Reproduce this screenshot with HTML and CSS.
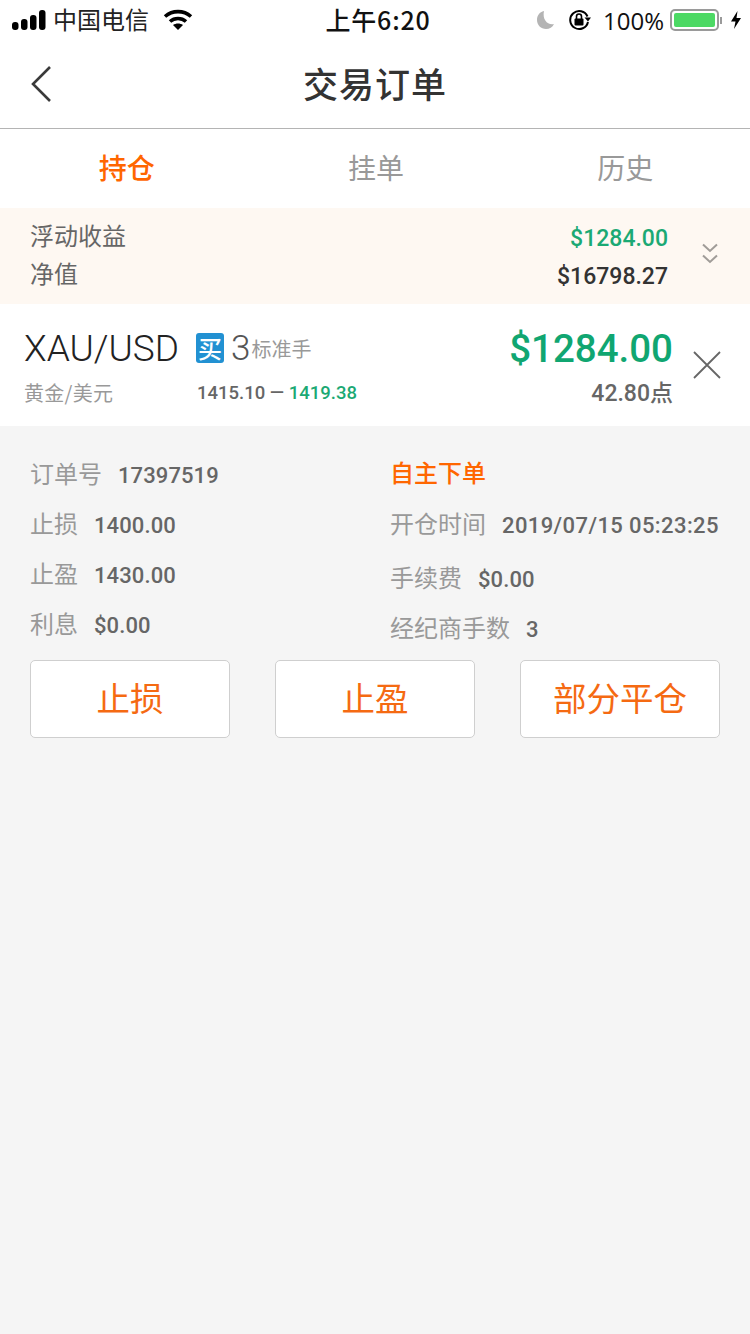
FILE: index.html
```html
<!DOCTYPE html>
<html lang="zh-CN">
<head>
    <meta charset="UTF-8">
    <meta name="viewport" content="width=device-width, initial-scale=1.0">
    <title>交易订单</title>
    <link rel="stylesheet" href="styles.css">
</head>
<body>
    <div class="page">
        <!-- Status bar -->
        <div class="status-bar">
            <div class="status-left">
                <svg class="signal" width="34" height="20" viewBox="0 0 34 20">
                    <rect x="0" y="12" width="6.500" height="8" rx="3" fill="#000"/>
                    <rect x="9" y="9" width="6.500" height="11" rx="3" fill="#000"/>
                    <rect x="18" y="5" width="6.500" height="15" rx="3" fill="#000"/>
                    <rect x="27" y="0" width="6.500" height="20" rx="3" fill="#000"/>
                </svg>
                <span class="carrier">中国电信</span>
                <svg class="wifi" width="30" height="22" viewBox="0 0 30 22" fill="none" stroke="#000" stroke-width="3.600">
                    <path d="M2 7.500C9.500 1 20.500 1 28 7.500"/>
                    <path d="M7 12.500C11.500 8.500 18.500 8.500 23 12.500"/>
                    <path d="M15 21L10 16C13 14 17 14 20 16Z" fill="#000" stroke="none"/>
                </svg>
            </div>
            <div class="status-time">上午6:20</div>
            <div class="status-right">
                <svg class="moon" width="20" height="20" viewBox="0 0 20 20">
                    <path d="M8 1C3.500 2 1 5.500 1 10c0 5 4 9 9 9 3.500 0 6.500-1.800 8-5-6 1.500-12-4-10-13Z" fill="#b4b4b4"/>
                </svg>
                <svg class="lock" width="24" height="22" viewBox="0 0 24 22" fill="none">
                    <path d="M19.500 7.500A9 9 0 1 0 20 13" stroke="#000" stroke-width="2"/>
                    <path d="M16.500 8.500L23 8.500L20 12.500Z" fill="#000"/>
                    <rect x="6.500" y="9.500" width="9" height="7" rx="1" fill="#000"/>
                    <path d="M8.500 10V7.500a2.500 2.500 0 0 1 5 0V10" stroke="#000" stroke-width="1.600"/>
                </svg>
                <span class="battery-pct">100%</span>
                <div class="battery"><div class="battery-fill"></div></div>
                <div class="battery-cap"></div>
                <svg class="bolt" width="12" height="18" viewBox="0 0 12 18">
                    <path d="M7.500 0L1 10.500H5.500L4 18L11 7H6.500Z" fill="#000"/>
                </svg>
            </div>
        </div>

        <!-- Nav bar -->
        <div class="nav-bar">
            <svg class="back-icon" width="22" height="38" viewBox="0 0 22 38" fill="none" stroke="#3a3a3a" stroke-width="2.600">
                <path d="M20 2L3 19L20 36"/>
            </svg>
            <h1 class="nav-title">交易订单</h1>
        </div>

        <!-- Tabs -->
        <div class="tabs">
            <div class="tab tab-active">持仓</div>
            <div class="tab">挂单</div>
            <div class="tab">历史</div>
        </div>

        <!-- Summary -->
        <div class="summary">
            <div class="summary-labels">
                <div>浮动收益</div>
                <div>净值</div>
            </div>
            <div class="summary-values">
                <div class="summary-profit">$1284.00</div>
                <div class="summary-net">$16798.27</div>
            </div>
            <svg class="expand-icon" width="16" height="21" viewBox="0 0 16 21" fill="none" stroke="#a09c98" stroke-width="2">
                <path d="M1 1.500L8 8L15 1.500"/>
                <path d="M1 12.500L8 19L15 12.500"/>
            </svg>
        </div>

        <!-- Position -->
        <div class="position">
            <div class="position-main">
                <div class="position-top">
                    <span class="symbol">XAU/USD</span>
                    <span class="buy-tag">买</span>
                    <span class="lots">3</span>
                    <span class="lots-unit">标准手</span>
                </div>
                <div class="position-bottom">
                    <span class="symbol-name">黄金/美元</span>
                    <span class="prices">1415.10 — <span class="price-now">1419.38</span></span>
                </div>
            </div>
            <div class="position-result">
                <div class="result-amount">$1284.00</div>
                <div class="result-points">42.80点</div>
            </div>
            <svg class="close-icon" width="28" height="28" viewBox="0 0 28 28" fill="none" stroke="#666" stroke-width="1.800">
                <path d="M1 1L27 27M27 1L1 27"/>
            </svg>
        </div>

        <!-- Order details -->
        <div class="details">
            <div class="detail-grid">
                <div class="detail-col detail-col-left">
                    <div class="detail-row"><span class="detail-label">订单号</span><span class="detail-value">17397519</span></div>
                    <div class="detail-row"><span class="detail-label">止损</span><span class="detail-value">1400.00</span></div>
                    <div class="detail-row"><span class="detail-label">止盈</span><span class="detail-value">1430.00</span></div>
                    <div class="detail-row"><span class="detail-label">利息</span><span class="detail-value">$0.00</span></div>
                </div>
                <div class="detail-col">
                    <div class="detail-row"><span class="order-source">自主下单</span></div>
                    <div class="detail-row"><span class="detail-label">开仓时间</span><span class="detail-value detail-value-date">2019/07/15 05:23:25</span></div>
                    <div class="detail-row detail-row-tall"><span class="detail-label">手续费</span><span class="detail-value">$0.00</span></div>
                    <div class="detail-row"><span class="detail-label">经纪商手数</span><span class="detail-value">3</span></div>
                </div>
            </div>
            <div class="actions">
                <button class="action-btn">止损</button>
                <button class="action-btn">止盈</button>
                <button class="action-btn">部分平仓</button>
            </div>
        </div>
    </div>
</body>
</html>
```

FILE: styles.css
```css
* {
    box-sizing: border-box;
}
html, body {
    margin: 0;
    padding: 0;
}
body {
    font-family: "Noto Sans CJK SC", Roboto, sans-serif;
    background-color: #f5f5f5;
}
.page {
    width: 750px;
    height: 1334px;
    display: flex;
    flex-direction: column;
    background-color: #f5f5f5;
}

/* Status bar */
.status-bar {
    height: 40px;
    background-color: #fff;
    display: flex;
    align-items: center;
    justify-content: space-between;
    padding: 0 8px 0 12px;
    position: relative;
    color: #000;
}
.status-left, .status-right {
    display: flex;
    align-items: center;
}
.carrier {
    font-size: 24px;
    margin-left: 7px;
    line-height: 38px;
    margin-bottom: 2px;
    color: #222;
}
.wifi {
    margin-left: 14px;
}
.status-time {
    position: absolute;
    left: 6px;
    right: 0;
    top: -1px;
    text-align: center;
    font-family: "Noto Sans CJK SC", sans-serif;
    font-size: 25px;
    line-height: 40px;
    font-weight: 500;
    letter-spacing: 0.8px;
    color: #111;
}
.moon {
    margin-right: 12px;
}
.lock {
    margin-right: 11px;
}
.battery-pct {
    font-family: "Open Sans", sans-serif;
    font-size: 24px;
    margin-right: 6px;
    color: #111;
}
.battery {
    width: 49px;
    height: 22px;
    border: 2px solid #9a9a9a;
    border-radius: 5px;
    padding: 2px;
}
.battery-fill {
    width: 100%;
    height: 100%;
    background-color: #4cd964;
    border-radius: 2px;
}
.battery-cap {
    width: 2px;
    height: 7px;
    margin-left: 1px;
    background-color: #9a9a9a;
}
.bolt {
    margin-left: 8px;
}

/* Nav bar */
.nav-bar {
    height: 89px;
    background-color: #fff;
    border-bottom: 1px solid #b4b4b4;
    position: relative;
    display: flex;
    align-items: center;
    justify-content: center;
    padding-bottom: 4px;
}
.nav-title {
    margin: 0;
    font-size: 35px;
    font-weight: 500;
    letter-spacing: 1px;
    color: #333;
}
.back-icon {
    position: absolute;
    left: 30px;
    top: 25px;
}

/* Tabs */
.tabs {
    height: 79px;
    background-color: #fff;
    display: flex;
    padding-left: 2px;
}
.tab {
    flex: 1;
    text-align: center;
    font-size: 28px;
    line-height: 77px;
    color: #999;
}
.tab-active {
    color: #ff6600;
    font-weight: 500;
}

/* Summary */
.summary {
    height: 96px;
    background-color: #fef8f2;
    display: flex;
    align-items: center;
    padding: 0 30px;
}
.summary-labels {
    flex: 1;
    font-size: 24px;
    line-height: 38px;
    color: #666;
    padding-bottom: 4px;
}
.summary-values {
    font-family: Roboto, sans-serif;
    font-weight: 500;
    font-size: 23px;
    line-height: 38px;
    text-align: right;
    padding-top: 4px;
}
.summary-profit {
    color: #1ba974;
}
.summary-net {
    color: #333;
}
.expand-icon {
    margin-left: 34px;
    margin-right: 2px;
    margin-bottom: 6px;
}

/* Position */
.position {
    height: 122px;
    background-color: #fff;
    display: flex;
    align-items: flex-start;
    padding-left: 24px;
    position: relative;
}
.position-main {
    flex: 1;
    padding-top: 22px;
}
.position-top {
    display: flex;
    align-items: center;
    height: 44px;
}
.symbol {
    font-family: Roboto, sans-serif;
    font-size: 37px;
    font-weight: 300;
    color: #222;
    width: 172px;
    white-space: nowrap;
}
.buy-tag {
    width: 28px;
    height: 30px;
    border-radius: 3px;
    background-color: #2291d2;
    color: #fff;
    font-size: 24px;
    font-weight: 500;
    line-height: 30px;
    text-align: center;
}
.lots {
    font-family: Roboto, sans-serif;
    font-size: 35px;
    font-weight: 300;
    color: #555;
    margin-left: 7px;
}
.lots-unit {
    font-size: 20px;
    color: #999;
    margin-left: 1px;
}
.position-bottom {
    display: flex;
    align-items: center;
    margin-top: 8px;
}
.symbol-name {
    font-size: 20px;
    color: #999;
    letter-spacing: 0.300px;
    width: 173px;
}
.prices {
    font-family: Roboto, sans-serif;
    font-size: 18.500px;
    font-weight: 500;
    color: #666;
}
.price-now {
    color: #1ba974;
}
.position-result {
    width: 200px;
    margin-right: 77px;
    padding-top: 18px;
    text-align: right;
    font-family: Roboto, "Noto Sans CJK SC", sans-serif;
    font-weight: 500;
}
.result-amount {
    font-size: 38.500px;
    line-height: 54px;
    color: #10a671;
}
.result-points {
    font-size: 23px;
    line-height: 36px;
    color: #666;
}
.close-icon {
    position: absolute;
    right: 29px;
    top: 47px;
}

/* Details */
.details {
    flex: 1;
    padding: 21px 30px 0;
}
.detail-grid {
    display: flex;
}
.detail-col {
    flex: 1;
}
.detail-col-left {
    flex: 0 0 360px;
}
.detail-row {
    height: 50px;
    display: flex;
    align-items: center;
    white-space: nowrap;
}
.detail-row-tall {
    height: 54px;
    padding-top: 4px;
}
.detail-label {
    font-size: 24px;
    color: #999;
    margin-right: 16px;
}
.detail-value {
    font-family: Roboto, sans-serif;
    font-size: 22px;
    font-weight: 500;
    letter-spacing: 0.100px;
    color: #666;
    margin-top: 6px;
}
.detail-value-date {
    letter-spacing: 0.400px;
}
.order-source {
    font-size: 24px;
    font-weight: 500;
    color: #ff6600;
    margin-bottom: 2px;
}
.actions {
    display: flex;
    justify-content: space-between;
    margin-top: 9px;
}
.action-btn {
    width: 200px;
    height: 78px;
    border: 1px solid #cfcfcf;
    border-radius: 5px;
    background-color: #fff;
    color: #f56a12;
    font-family: "Noto Sans CJK SC", sans-serif;
    font-size: 33.500px;
    padding: 0 0 6px;
}
```
